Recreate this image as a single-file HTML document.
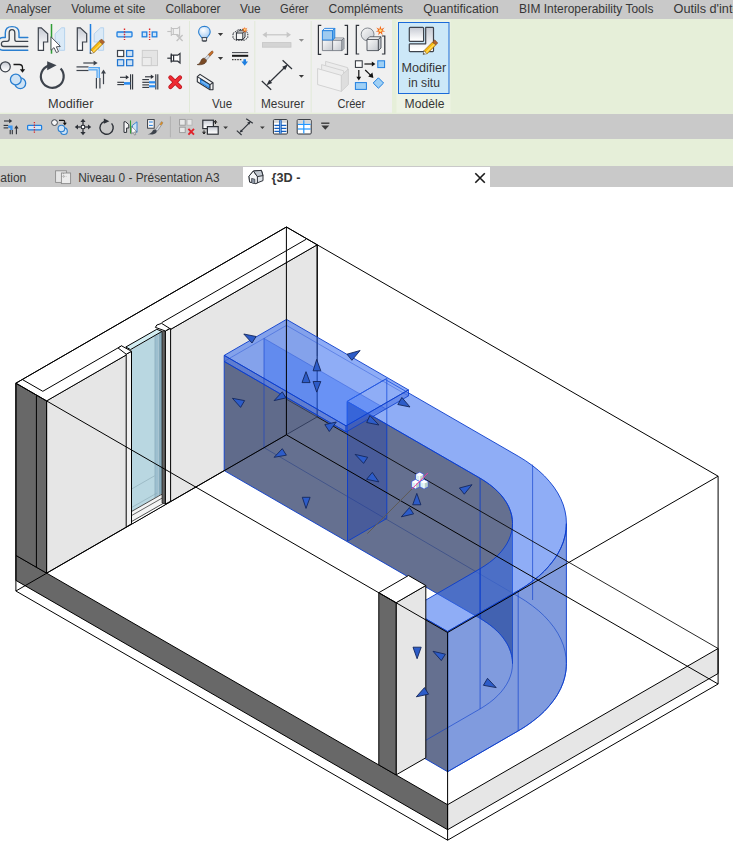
<!DOCTYPE html>
<html lang="fr"><head><meta charset="utf-8"><title>Revit - {3D}</title>
<style>
html,body{margin:0;padding:0;background:#fff;}
body{width:733px;height:850px;overflow:hidden;font-family:"Liberation Sans",sans-serif;}
svg{display:block;}
svg text{font-family:"Liberation Sans",sans-serif;}
</style></head><body>
<svg width="733" height="850" viewBox="0 0 733 850">
<rect x="0" y="0" width="733" height="850" fill="#fff"/>
<g id="scene">
<polygon points="15.9,555.4 447.6,804.7 447.6,829.7 15.9,580.4" fill="#686868" stroke="#000" stroke-width="1.0" />
<polygon points="447.6,804.7 718.1,648.5 718.1,673.5 447.6,829.7" fill="#e6e6e6" stroke="#000" stroke-width="1.0" />
<polygon points="46.6,400.9 317.2,244.8 317.2,416.9 46.6,573.1" fill="#e6e6e6" stroke="#000" stroke-width="1.0" />
<polygon points="15.9,383.2 46.6,400.9 46.6,573.1 15.9,555.4" fill="#686868" stroke="#000" stroke-width="1.0" />
<polygon points="15.9,383.2 286.4,227.0 317.2,244.8 46.6,400.9" fill="#fff" stroke="#000" stroke-width="1.0" />
<line x1="36.4" y1="395.1" x2="36.4" y2="567.2" stroke="#000" stroke-width="1.0" />
<polyline points="22.3,379.5 42.8,391.3 306.1,239.3" fill="none" stroke="#000" stroke-width="1.0" />
<g id="door" stroke-linejoin="round">
<polygon points="121.5,344.2 161.6,321.4 161.6,325.4 121.5,348.0" fill="#fff" stroke="none" stroke-width="1" />
<polygon points="126.2,353.9 170.6,328.4 170.6,501.5 126.2,527.2" fill="#fff" stroke="none" stroke-width="1" />
<polygon points="131.5,349.5 154.9,335.8 154.9,497.7 131.5,511.5" fill="#b9d7e1" stroke="none" stroke-width="1" />
<polygon points="154.9,335.8 158.7,333.6 158.7,495.5 154.9,497.7" fill="#9dbfcf" stroke="none" stroke-width="1" />
<polygon points="158.7,333.6 162.0,331.6 162.0,493.5 158.7,495.5" fill="#86aabb" stroke="none" stroke-width="1" />
<line x1="154.9" y1="336.0" x2="154.9" y2="497.7" stroke="#7fa3b3" stroke-width="0.6" />
<line x1="131.6" y1="489.0" x2="154.6" y2="475.8" stroke="#8aa8b4" stroke-width="0.6" />
<line x1="131.6" y1="507.5" x2="157.0" y2="493.0" stroke="#8aa8b4" stroke-width="0.6" />
<polygon points="131.5,511.5 162.2,494.0 163.6,503.2 131.5,521.6" fill="#f4f4f4" stroke="#000" stroke-width="0.7" />
<line x1="131.5" y1="515.6" x2="163.0" y2="497.6" stroke="#000" stroke-width="0.6" />
<polygon points="125.8,347.0 156.8,329.3 162.0,331.4 130.5,349.6" fill="#d4eef3" stroke="#000" stroke-width="1.0" />
<polygon points="126.2,354.2 131.5,351.3 131.5,523.8 126.2,527.0" fill="#f2f2f2" stroke="#000" stroke-width="1.0" />
<polygon points="162.0,331.4 165.4,331.0 165.4,504.0 162.0,503.0" fill="#626262" stroke="#000" stroke-width="0.6" />
<polygon points="165.4,331.0 170.6,328.4 170.6,501.3 165.4,504.0" fill="#f2f2f2" stroke="#000" stroke-width="1.0" />
<polygon points="118.1,348.0 121.5,345.8 131.5,351.3 126.2,354.2" fill="#fff" stroke="#000" stroke-width="1.0" />
<polygon points="155.4,327.4 156.8,325.0 161.6,323.4 169.7,328.4 165.4,331.0" fill="#fff" stroke="#000" stroke-width="1.0" />
</g>
<line x1="317.2" y1="244.8" x2="317.2" y2="356.0" stroke="#000" stroke-width="1.0" />
<line x1="317.2" y1="356.0" x2="317.2" y2="416.9" stroke="#000" stroke-width="0.6" />
<line x1="286.4" y1="399.2" x2="317.2" y2="416.9" stroke="#000" stroke-width="1.0" />
<g id="model" stroke-linejoin="round">
<polyline points="264.0,447.6 518.2,596.4 518.2,596.4 525.5,600.9 532.4,605.8 538.7,610.8 544.4,616.1 549.4,621.6 553.9,627.3 557.7,633.1 560.8,639.0 563.3,645.1 565.0,651.2 566.1,657.4 566.4,663.6 566.1,669.9 565.0,676.1 563.3,682.2 560.8,688.3 557.7,694.2 553.9,700.0 549.4,705.7 544.4,711.2 538.7,716.5 532.4,721.5 525.5,726.4 518.2,730.9 447.6,771.7" fill="none" stroke="#0a3ccc" stroke-width="0.8" stroke-opacity="0.9"/>
<polygon points="224.2,361.4 347.0,432.4 347.0,401.4 480.1,478.2 480.1,478.2 482.6,479.7 485.0,481.3 487.4,482.9 489.6,484.5 491.8,486.2 493.9,487.9 495.8,489.7 497.7,491.5 499.5,493.3 501.1,495.1 502.7,497.0 504.1,499.0 505.4,500.9 506.7,502.9 507.8,504.9 508.8,506.9 509.6,508.9 510.4,511.0 511.1,513.0 511.6,515.1 512.0,517.2 512.3,519.3 512.5,521.4 512.5,523.5 512.5,663.6 512.5,661.6 512.3,659.5 512.0,657.4 511.6,655.3 511.1,653.2 510.4,651.2 509.6,649.1 508.8,647.1 507.8,645.1 506.7,643.1 505.4,641.1 504.1,639.2 502.7,637.2 501.1,635.3 499.5,633.5 497.7,631.7 495.8,629.9 493.9,628.1 491.8,626.4 489.6,624.7 487.4,623.1 485.0,621.5 482.6,619.9 480.1,618.4 480.1,618.4 224.2,470.6" fill="rgb(62,76,116)" stroke="#0a3ccc" stroke-width="0.9" fill-opacity="0.8"/>
<polygon points="347.5,401.1 386.8,423.8 386.8,518.5 347.5,541.2" fill="rgb(30,60,170)" stroke="none" stroke-width="0" fill-opacity="0.38"/>
<polyline points="347.5,541.2 347.5,401.1 386.8,378.4 386.8,518.5 347.5,541.2" fill="none" stroke="#0a3ccc" stroke-width="0.9" />
<polygon points="405.9,391.4 518.2,456.2 518.2,456.2 525.5,460.7 532.4,465.6 538.7,470.6 544.4,475.9 549.4,481.4 553.9,487.1 557.7,492.9 560.8,498.8 563.3,504.9 565.0,511.0 566.1,517.2 566.4,523.5 566.1,529.7 565.0,535.9 563.3,542.0 560.8,548.1 557.7,554.0 553.9,559.8 549.4,565.5 544.4,571.0 538.7,576.3 532.4,581.3 525.5,586.2 518.2,590.7 447.6,631.5 409.5,609.5 480.1,568.7 485.0,565.6 489.6,562.4 493.9,559.0 497.7,555.4 501.1,551.8 504.1,547.9 506.7,544.0 508.8,540.0 510.4,535.9 511.6,531.8 512.3,527.6 512.5,523.5 512.3,519.3 511.6,515.1 510.4,511.0 508.8,506.9 506.7,502.9 504.1,499.0 501.1,495.1 497.7,491.5 493.9,487.9 489.6,484.5 485.0,481.3 480.1,478.2 480.1,478.2 367.8,413.4" fill="rgb(58,110,240)" stroke="none" stroke-width="0" fill-opacity="0.57"/>
<polyline points="347.0,401.4 385.1,379.4 518.2,456.2 518.2,456.2 525.5,460.7 532.4,465.6 538.7,470.6 544.4,475.9 549.4,481.4 553.9,487.1 557.7,492.9 560.8,498.8 563.3,504.9 565.0,511.0 566.1,517.2 566.4,523.5 566.1,529.7 565.0,535.9 563.3,542.0 560.8,548.1 557.7,554.0 553.9,559.8 549.4,565.5 544.4,571.0 538.7,576.3 532.4,581.3 525.5,586.2 518.2,590.7 447.6,631.5 409.5,609.5 480.1,568.7 485.0,565.6 489.6,562.4 493.9,559.0 497.7,555.4 501.1,551.8 504.1,547.9 506.7,544.0 508.8,540.0 510.4,535.9 511.6,531.8 512.3,527.6 512.5,523.5 512.3,519.3 511.6,515.1 510.4,511.0 508.8,506.9 506.7,502.9 504.1,499.0 501.1,495.1 497.7,491.5 493.9,487.9 489.6,484.5 485.0,481.3 480.1,478.2 480.1,478.2 347.0,401.4" fill="none" stroke="#0a3ccc" stroke-width="0.9" />
<polygon points="447.6,631.5 518.2,590.7 518.2,590.7 521.9,588.5 525.5,586.2 529.0,583.8 532.4,581.3 535.6,578.8 538.7,576.3 541.6,573.7 544.4,571.0 547.0,568.3 549.4,565.5 551.7,562.7 553.9,559.8 555.9,557.0 557.7,554.0 559.3,551.1 560.8,548.1 562.1,545.0 563.3,542.0 564.2,538.9 565.0,535.9 565.6,532.8 566.1,529.7 566.3,526.6 566.4,523.5 566.4,663.6 566.3,666.8 566.1,669.9 565.6,673.0 565.0,676.1 564.2,679.1 563.3,682.2 562.1,685.2 560.8,688.3 559.3,691.3 557.7,694.2 555.9,697.2 553.9,700.0 551.7,702.9 549.4,705.7 547.0,708.5 544.4,711.2 541.6,713.9 538.7,716.5 535.6,719.0 532.4,721.5 529.0,724.0 525.5,726.4 521.9,728.7 518.2,730.9 447.6,771.7" fill="rgb(44,88,200)" stroke="#0a3ccc" stroke-width="0.9" fill-opacity="0.6"/>
<polygon points="424.7,618.2 447.6,631.5 447.6,771.7 424.7,758.4" fill="rgb(62,76,116)" stroke="#0a3ccc" stroke-width="0.9" fill-opacity="0.8"/>
<polygon points="224.2,355.4 286.5,319.4 408.5,389.9 346.1,425.9" fill="rgb(58,110,240)" stroke="#0a3ccc" stroke-width="0.9" fill-opacity="0.57"/>
<polygon points="264.0,338.4 385.9,408.9 346.1,425.9 264.0,378.4" fill="rgb(40,100,245)" stroke="none" stroke-width="0" fill-opacity="0.36"/>
<polygon points="224.2,355.4 346.1,425.9 346.1,431.9 224.2,361.4" fill="rgb(50,90,200)" stroke="#0a3ccc" stroke-width="0.9" fill-opacity="0.75"/>
<polygon points="346.1,425.9 408.5,389.9 408.5,395.9 346.1,431.9" fill="rgb(60,100,220)" stroke="#0a3ccc" stroke-width="0.8" fill-opacity="0.45"/>
<polyline points="224.2,361.4 286.5,325.4 408.5,395.9" fill="none" stroke="#0a3ccc" stroke-width="0.6" stroke-opacity="0.6"/>
<line x1="264.0" y1="338.4" x2="385.9" y2="408.9" stroke="#0a3ccc" stroke-width="0.6" stroke-opacity="0.6"/>
<line x1="264.0" y1="338.4" x2="264.0" y2="447.6" stroke="#0a3ccc" stroke-width="0.7" stroke-opacity="0.8"/>
<line x1="480.1" y1="478.2" x2="480.1" y2="618.4" stroke="#0a3ccc" stroke-width="0.9" stroke-opacity="0.9"/>
<line x1="518.2" y1="590.7" x2="518.2" y2="730.9" stroke="#0a3ccc" stroke-width="0.8" stroke-opacity="0.8"/>
<line x1="480.1" y1="568.7" x2="480.1" y2="708.9" stroke="#0a3ccc" stroke-width="0.8" stroke-opacity="0.8"/>
<line x1="532.6" y1="464.6" x2="532.6" y2="600.0" stroke="#0a3ccc" stroke-width="0.8" stroke-opacity="0.8"/>
<polyline points="480.1,618.4 485.0,621.5 489.6,624.7 493.9,628.1 497.7,631.7 501.1,635.3 504.1,639.2 506.7,643.1 508.8,647.1 510.4,651.2 511.6,655.3 512.3,659.5 512.5,663.6 512.3,667.8 511.6,672.0 510.4,676.1 508.8,680.2 506.7,684.2 504.1,688.1 501.1,692.0 497.7,695.6 493.9,699.2 489.6,702.6 485.0,705.8 480.1,708.9 409.5,749.7" fill="none" stroke="#0a3ccc" stroke-width="0.7" stroke-opacity="0.85"/>
</g>
<polygon points="396.1,602.7 425.8,585.5 425.8,757.8 396.1,774.9" fill="#e6e6e6" stroke="#000" stroke-width="1.0" />
<polygon points="378.8,592.7 396.1,602.7 396.1,774.9 378.8,764.9" fill="#686868" stroke="#000" stroke-width="1.0" />
<polygon points="378.8,592.7 408.5,575.5 425.8,585.5 396.1,602.7" fill="#fff" stroke="#000" stroke-width="1.0" />
<line x1="15.9" y1="383.2" x2="286.4" y2="227.0" stroke="#000" stroke-width="1.0" />
<line x1="15.9" y1="591.0" x2="286.4" y2="434.8" stroke="#000" stroke-width="1.0" />
<line x1="15.9" y1="383.2" x2="15.9" y2="591.0" stroke="#000" stroke-width="1.0" />
<line x1="286.4" y1="227.0" x2="718.1" y2="476.2" stroke="#000" stroke-width="1.0" />
<line x1="286.4" y1="434.8" x2="718.1" y2="684.0" stroke="#000" stroke-width="1.0" />
<line x1="286.4" y1="227.0" x2="286.4" y2="434.8" stroke="#000" stroke-width="1.0" />
<line x1="718.1" y1="476.2" x2="447.6" y2="632.5" stroke="#000" stroke-width="1.0" />
<line x1="718.1" y1="684.0" x2="447.6" y2="840.2" stroke="#000" stroke-width="1.0" />
<line x1="718.1" y1="476.2" x2="718.1" y2="684.0" stroke="#000" stroke-width="1.0" />
<line x1="447.6" y1="632.5" x2="15.9" y2="383.2" stroke="#000" stroke-width="1.0" />
<line x1="447.6" y1="840.2" x2="15.9" y2="591.0" stroke="#000" stroke-width="1.0" />
<line x1="447.6" y1="632.5" x2="447.6" y2="840.2" stroke="#000" stroke-width="1.0" />
<line x1="317.2" y1="416.9" x2="718.1" y2="648.5" stroke="#000" stroke-width="0.85" />
</g>
<g id="arrows">
<polygon points="243.8,334.0 256.1,336.5 252.0,343.0" fill="#2d5cc8" stroke="#14275c" stroke-width="0.9" stroke-linejoin="round"/>
<polygon points="316.7,359.4 313.1,370.8 320.8,370.8" fill="#2d5cc8" stroke="#14275c" stroke-width="0.9" stroke-linejoin="round"/>
<polygon points="306.0,371.7 302.0,382.6 310.1,382.6" fill="#2d5cc8" stroke="#14275c" stroke-width="0.9" stroke-linejoin="round"/>
<polygon points="316.7,392.1 313.1,381.5 320.8,381.5" fill="#2d5cc8" stroke="#14275c" stroke-width="0.9" stroke-linejoin="round"/>
<polygon points="232.4,398.3 244.6,400.6 240.6,407.4" fill="#2d5cc8" stroke="#14275c" stroke-width="0.9" stroke-linejoin="round"/>
<polygon points="274.1,400.6 282.3,391.8 285.9,397.9" fill="#2d5cc8" stroke="#14275c" stroke-width="0.9" stroke-linejoin="round"/>
<polygon points="360.1,350.5 347.0,354.2 351.9,360.3" fill="#2d5cc8" stroke="#14275c" stroke-width="0.9" stroke-linejoin="round"/>
<polygon points="401.9,397.5 397.8,404.5 410.0,407.0" fill="#2d5cc8" stroke="#14275c" stroke-width="0.9" stroke-linejoin="round"/>
<polygon points="369.9,415.5 366.7,422.5 378.9,425.0" fill="#2d5cc8" stroke="#14275c" stroke-width="0.9" stroke-linejoin="round"/>
<polygon points="324.8,424.6 336.3,422.0 329.3,431.5" fill="#2d5cc8" stroke="#14275c" stroke-width="0.9" stroke-linejoin="round"/>
<polygon points="274.1,457.3 282.3,448.7 286.4,455.2" fill="#2d5cc8" stroke="#14275c" stroke-width="0.9" stroke-linejoin="round"/>
<polygon points="306.0,508.4 302.3,497.3 310.1,497.3" fill="#2d5cc8" stroke="#14275c" stroke-width="0.9" stroke-linejoin="round"/>
<polygon points="355.1,454.4 367.7,457.3 363.6,463.4" fill="#2d5cc8" stroke="#14275c" stroke-width="0.9" stroke-linejoin="round"/>
<polygon points="366.6,479.3 372.3,472.4 378.9,481.9" fill="#2d5cc8" stroke="#14275c" stroke-width="0.9" stroke-linejoin="round"/>
<polygon points="416.8,493.4 412.7,504.8 420.9,504.8" fill="#2d5cc8" stroke="#14275c" stroke-width="0.9" stroke-linejoin="round"/>
<polygon points="401.3,516.8 409.5,507.6 413.6,513.9" fill="#2d5cc8" stroke="#14275c" stroke-width="0.9" stroke-linejoin="round"/>
<polygon points="459.4,488.0 472.0,484.7 464.3,494.2" fill="#2d5cc8" stroke="#14275c" stroke-width="0.9" stroke-linejoin="round"/>
<polygon points="417.1,658.7 413.0,647.2 421.2,647.2" fill="#2d5cc8" stroke="#14275c" stroke-width="0.9" stroke-linejoin="round"/>
<polygon points="433.0,651.3 445.4,654.2 441.3,660.6" fill="#2d5cc8" stroke="#14275c" stroke-width="0.9" stroke-linejoin="round"/>
<polygon points="416.3,696.8 424.5,687.6 428.6,694.2" fill="#2d5cc8" stroke="#14275c" stroke-width="0.9" stroke-linejoin="round"/>
<polygon points="487.5,678.3 483.4,685.3 496.2,687.6" fill="#2d5cc8" stroke="#14275c" stroke-width="0.9" stroke-linejoin="round"/>
<line x1="367.3" y1="533.7" x2="412.1" y2="488.8" stroke="#5f5a55" stroke-width="1"/>
<g transform="translate(416.0,472.6)" stroke-linejoin="round"><polygon points="3.7,0 7.4,1.9 7.4,6.9 3.7,8.6 0,6.9 0,1.9" fill="#fff" stroke="#3d5be6" stroke-width="1.1"/><polygon points="0,1.9 3.7,3.8 3.7,8.6 0,6.9" fill="#d6f0f6"/><polygon points="3.7,3.8 7.4,1.9 7.4,6.9 3.7,8.6" fill="#b9cfc9"/><polygon points="3.7,0 7.4,1.9 3.7,3.8 0,1.9" fill="#fff"/><line x1="3.7" y1="3.8" x2="3.7" y2="8.6" stroke="#fff" stroke-width="1"/></g>
<g transform="translate(411.9,479.8)" stroke-linejoin="round"><polygon points="3.7,0 7.4,1.9 7.4,6.9 3.7,8.6 0,6.9 0,1.9" fill="#fff" stroke="#3d5be6" stroke-width="1.1"/><polygon points="0,1.9 3.7,3.8 3.7,8.6 0,6.9" fill="#d6f0f6"/><polygon points="3.7,3.8 7.4,1.9 7.4,6.9 3.7,8.6" fill="#b9cfc9"/><polygon points="3.7,0 7.4,1.9 3.7,3.8 0,1.9" fill="#fff"/><line x1="3.7" y1="3.8" x2="3.7" y2="8.6" stroke="#fff" stroke-width="1"/></g>
<g transform="translate(420.4,479.8)" stroke-linejoin="round"><polygon points="3.7,0 7.4,1.9 7.4,6.9 3.7,8.6 0,6.9 0,1.9" fill="#fff" stroke="#3d5be6" stroke-width="1.1"/><polygon points="0,1.9 3.7,3.8 3.7,8.6 0,6.9" fill="#d6f0f6"/><polygon points="3.7,3.8 7.4,1.9 7.4,6.9 3.7,8.6" fill="#b9cfc9"/><polygon points="3.7,0 7.4,1.9 3.7,3.8 0,1.9" fill="#fff"/><line x1="3.7" y1="3.8" x2="3.7" y2="8.6" stroke="#fff" stroke-width="1"/></g>
<line x1="412.1" y1="488.8" x2="427.9" y2="472.9" stroke="#f23aa6" stroke-width="1"/>
</g>
<g id="chrome">
<rect x="0" y="0" width="733" height="19" fill="#c9c9c9"/>
<rect x="0" y="19" width="733" height="95" fill="#e6efd9"/>
<rect x="0" y="20" width="392" height="92.7" fill="#f0f0f0"/>
<rect x="396.5" y="20" width="54" height="92.7" fill="#edf3e4"/>
<rect x="0" y="114" width="733" height="25" fill="#c9c9c9"/>
<rect x="0" y="139" width="733" height="27" fill="#e6efd9"/>
<rect x="0" y="166" width="733" height="21" fill="#c9c9c9"/>
<rect x="243" y="167" width="247" height="20" fill="#fff"/>
<line x1="189.5" y1="21" x2="189.5" y2="112.5" stroke="#e1e9d8" stroke-width="1"/>
<line x1="254.8" y1="21" x2="254.8" y2="112.5" stroke="#e1e9d8" stroke-width="1"/>
<line x1="311.2" y1="21" x2="311.2" y2="112.5" stroke="#e1e9d8" stroke-width="1"/>
<text x="6.0" y="13.0" font-size="12" fill="#363636" font-weight="normal" text-anchor="start" textLength="45.1" lengthAdjust="spacingAndGlyphs">Analyser</text>
<text x="71.2" y="13.0" font-size="12" fill="#363636" font-weight="normal" text-anchor="start" textLength="74.2" lengthAdjust="spacingAndGlyphs">Volume et site</text>
<text x="165.4" y="13.0" font-size="12" fill="#363636" font-weight="normal" text-anchor="start" textLength="55.2" lengthAdjust="spacingAndGlyphs">Collaborer</text>
<text x="240.0" y="13.0" font-size="12" fill="#363636" font-weight="normal" text-anchor="start" textLength="20.7" lengthAdjust="spacingAndGlyphs">Vue</text>
<text x="280.1" y="13.0" font-size="12" fill="#363636" font-weight="normal" text-anchor="start" textLength="28.4" lengthAdjust="spacingAndGlyphs">Gérer</text>
<text x="328.6" y="13.0" font-size="12" fill="#363636" font-weight="normal" text-anchor="start" textLength="74.5" lengthAdjust="spacingAndGlyphs">Compléments</text>
<text x="423.2" y="13.0" font-size="12" fill="#363636" font-weight="normal" text-anchor="start" textLength="75.5" lengthAdjust="spacingAndGlyphs">Quantification</text>
<text x="519.1" y="13.0" font-size="12" fill="#363636" font-weight="normal" text-anchor="start" textLength="134.3" lengthAdjust="spacingAndGlyphs">BIM Interoperability Tools</text>
<text x="673.5" y="13.0" font-size="12" fill="#363636" font-weight="normal" text-anchor="start" textLength="66.0" lengthAdjust="spacingAndGlyphs">Outils d'inte</text>
<text x="48.0" y="107.7" font-size="12" fill="#363636" font-weight="normal" text-anchor="start" textLength="45.4" lengthAdjust="spacingAndGlyphs">Modifier</text>
<text x="212.0" y="107.7" font-size="12" fill="#363636" font-weight="normal" text-anchor="start" textLength="20.2" lengthAdjust="spacingAndGlyphs">Vue</text>
<text x="261.0" y="107.7" font-size="12" fill="#363636" font-weight="normal" text-anchor="start" textLength="43.4" lengthAdjust="spacingAndGlyphs">Mesurer</text>
<text x="337.5" y="107.7" font-size="12" fill="#363636" font-weight="normal" text-anchor="start" textLength="27.7" lengthAdjust="spacingAndGlyphs">Créer</text>
<text x="404.6" y="107.7" font-size="12" fill="#363636" font-weight="normal" text-anchor="start" textLength="39.8" lengthAdjust="spacingAndGlyphs">Modèle</text>
<rect x="398.5" y="22.5" width="50.5" height="71" fill="#cce8f8" stroke="#1a6ad9" stroke-width="1"/>
<text x="401.4" y="72.2" font-size="12" fill="#363636" font-weight="normal" text-anchor="start" textLength="44.8" lengthAdjust="spacingAndGlyphs">Modifier</text>
<text x="408.3" y="86.6" font-size="12" fill="#363636" font-weight="normal" text-anchor="start" textLength="31.7" lengthAdjust="spacingAndGlyphs">in situ</text>
<text x="0.3" y="181.8" font-size="12" fill="#363636" font-weight="normal" text-anchor="start" textLength="26.0" lengthAdjust="spacingAndGlyphs">ation</text>
<text x="78.2" y="181.8" font-size="12" fill="#363636" font-weight="normal" text-anchor="start" textLength="141.4" lengthAdjust="spacingAndGlyphs">Niveau 0 - Présentation A3</text>
<text x="271.6" y="181.8" font-size="12" fill="#363636" font-weight="bold" text-anchor="start" textLength="28.8" lengthAdjust="spacingAndGlyphs">{3D -</text>
<path d="M475.3 173.2 L484.8 182.7 M484.8 173.2 L475.3 182.7" stroke="#1a1a1a" stroke-width="1.6" fill="none"/>
</g>
<g id="icons">
<defs>
<linearGradient id="gw" x1="0" y1="0" x2="0" y2="1"><stop offset="0" stop-color="#c6cad3"/><stop offset="0.9" stop-color="#ffffff"/></linearGradient>
<linearGradient id="gb" x1="0" y1="0" x2="0" y2="1"><stop offset="0" stop-color="#eef6fd"/><stop offset="1" stop-color="#b9d8f2"/></linearGradient>
<linearGradient id="gg" x1="0" y1="0" x2="1" y2="1"><stop offset="0" stop-color="#fafafa"/><stop offset="1" stop-color="#c4c8ce"/></linearGradient>
<radialGradient id="gbulb" cx="0.4" cy="0.35" r="0.7"><stop offset="0" stop-color="#ffffff"/><stop offset="1" stop-color="#a9cdf3"/></radialGradient>
<path id="mshape" d="M0 0 H3 L9.4 6 V14.2 H5.2 V22.5 H0 Z"/>
<path id="tri" d="M-2.6 -1.3 H2.6 L0 1.6 Z"/>
<g id="star"><path d="M0 -5 L1.1 -1.6 L4.3 -3.2 L2.2 -0.4 L5 1 L1.7 1.3 L2.2 4.8 L0 2.2 L-2.2 4.8 L-1.7 1.3 L-5 1 L-2.2 -0.4 L-4.3 -3.2 L-1.1 -1.6 Z" fill="#f26a1b"/><circle r="1.5" fill="#ffe27a"/></g>
<g id="pencil"><polygon points="0,0 0.84,-3.96 3.96,-0.84" fill="#fff" stroke="#5a4a2a" stroke-width="0.5"/><polygon points="0.84,-3.96 9.4,-12.52 12.52,-9.4 3.96,-0.84" fill="#f7b90c" stroke="#8a5a10" stroke-width="0.6"/><polygon points="2.4,-2.4 10.96,-10.96 12.0,-9.9 3.4,-1.4" fill="#ffd95a"/><polygon points="9.4,-12.52 11.52,-14.64 14.64,-11.52 12.52,-9.4" fill="#b5652b" stroke="#70401a" stroke-width="0.5"/><polygon points="0,0 0.4,-1.7 1.7,-0.4" fill="#333"/></g>
<g id="cursor"><polygon points="0,0 0,13.5 3,10.8 5.4,15.8 7.6,14.8 5.3,10 9.4,9.6" fill="#fff" stroke="#3d434c" stroke-width="0.9" stroke-linejoin="round"/></g>
</defs>

<!-- ===== Modifier panel : large icons ===== -->
<g fill="none" stroke-linecap="round" stroke-linejoin="round">
 <path d="M27.8 37.5 H19 V33 C19 28.5 15.8 26.6 12 26.6 C8.3 26.6 5.3 28.6 5.3 33 V37.5 H3 C0 37.5 -2 40 -2 44 C-2 48 0 50.3 3 50.3 H27.8" stroke="#2a7fd0" stroke-width="1.4"/>
 <path d="M27.8 41.3 H16.3 C15.2 41.3 14.8 40.4 14.8 39 V33 C14.8 30.6 13.5 29.6 12 29.6 C10.5 29.6 9.2 30.6 9.2 33 V39 C9.2 40.6 8.5 41.3 7 41.3 H4 C2.2 41.3 1.4 42.5 1.4 43.9 C1.4 45.4 2.3 46.5 4 46.5 H27.8" stroke="#3d434c" stroke-width="1.3"/>
</g>
<!-- mirror pick axis -->
<use href="#mshape" x="38.3" y="27.8" fill="url(#gw)" stroke="#3d434c" stroke-width="1.2"/>
<use href="#mshape" transform="translate(64.6,27.8) scale(-1,1)" fill="#dbeaf7" stroke="#b5d3ee" stroke-width="1"/>
<line x1="51.5" y1="24" x2="51.5" y2="53.7" stroke="#2f9e35" stroke-width="1.5"/>
<use href="#cursor" x="51" y="36.8"/>
<!-- mirror draw axis -->
<use href="#mshape" x="77.3" y="27.8" fill="url(#gw)" stroke="#3d434c" stroke-width="1.2"/>
<use href="#mshape" transform="translate(103.6,27.8) scale(-1,1)" fill="#dbeaf7" stroke="#b5d3ee" stroke-width="1"/>
<line x1="90.5" y1="24" x2="90.5" y2="53.7" stroke="#1f7fe0" stroke-width="1.5"/>
<use href="#pencil" x="90" y="53.6"/>
<!-- copy -->
<circle cx="5.3" cy="66.8" r="5" fill="url(#gw)" stroke="#3d434c" stroke-width="1.2"/>
<path d="M13.5 64.5 H19.3 C21.6 64.5 22.5 65.8 22.5 67.8 V70" fill="none" stroke="#1a1a1a" stroke-width="1.3"/>
<polygon points="19.8,69.3 25.2,69.3 22.5,72.8" fill="#1a1a1a"/>
<circle cx="20.3" cy="83.3" r="5.4" fill="#cfe3f5" stroke="#2a7fd0" stroke-width="1.3"/>
<circle cx="15.8" cy="79.5" r="5.4" fill="#cfe3f5" stroke="#2a7fd0" stroke-width="1.3"/>
<!-- rotate -->
<path d="M60.6 68.6 A11.4 11.4 0 1 1 48.6 65.6" fill="none" stroke="#3d434c" stroke-width="2.2"/>
<polygon points="47.2,61.3 56.6,65.3 47.2,70.2" fill="#3d434c"/>
<!-- trim/extend to corner -->
<g stroke="#3d434c" stroke-width="1.2" fill="none">
 <line x1="83.3" y1="63" x2="95" y2="63"/>
 <line x1="76.5" y1="66.9" x2="88.5" y2="66.9"/><line x1="76.5" y1="70.5" x2="88.5" y2="70.5"/>
 <line x1="96.4" y1="78" x2="96.4" y2="88.6"/><line x1="99.9" y1="78" x2="99.9" y2="88.6"/>
 <line x1="103.5" y1="84.2" x2="103.5" y2="72"/>
</g>
<polygon points="93.6,60.4 97.6,63 93.6,65.6" fill="#3d434c"/>
<polygon points="101,73.4 103.5,69.4 106,73.4" fill="#3d434c"/>
<path d="M88.5 68.7 H98.2 V78" fill="none" stroke="#58a8f2" stroke-width="3.6"/>
<path d="M88.5 68.7 H98.2 V78" fill="none" stroke="#cfe6fb" stroke-width="1"/>

<!-- ===== Modifier panel : small icons ===== -->
<rect x="117" y="32" width="15" height="4.8" rx="0.8" fill="#cfe6f8" stroke="#1f7fe0" stroke-width="1.3"/>
<line x1="124.5" y1="28.6" x2="124.5" y2="40" stroke="#e02626" stroke-width="1.4" stroke-dasharray="1.4 1.2"/>
<rect x="142.2" y="32" width="4.6" height="4.8" fill="#cfe6f8" stroke="#1f7fe0" stroke-width="1.3"/>
<rect x="152.2" y="32" width="4.6" height="4.8" fill="#cfe6f8" stroke="#1f7fe0" stroke-width="1.3"/>
<line x1="149.6" y1="28.6" x2="149.6" y2="40" stroke="#e02626" stroke-width="1.4" stroke-dasharray="1.4 1.2"/>
<!-- unpin (disabled) -->
<g stroke="#c2c2c2" stroke-width="1.1" fill="none">
 <line x1="167.3" y1="31.5" x2="171.3" y2="31.5"/>
 <path d="M171.3 27 V36 M173.3 28.5 H177.5 M173.3 34.5 H177.5 M171.3 28.5 H173.3 V34.5 H171.3 M177.5 28.5 L179.6 26.8 V36.2 L177.5 34.5"/>
 <path d="M176.6 35 L182.6 41 M182.6 35 L176.6 41" stroke-width="1.4"/>
</g>
<!-- array -->
<rect x="117.5" y="50.5" width="6.2" height="6" fill="#fff" stroke="#3d434c" stroke-width="1.2"/>
<rect x="126.6" y="50.5" width="6.2" height="6" fill="#cfe3f5" stroke="#1f74d0" stroke-width="1.2"/>
<rect x="117.5" y="59.7" width="6.2" height="6" fill="#cfe3f5" stroke="#1f74d0" stroke-width="1.2"/>
<rect x="126.6" y="59.7" width="6.2" height="6" fill="#cfe3f5" stroke="#1f74d0" stroke-width="1.2"/>
<!-- scale (disabled) -->
<rect x="142.3" y="50.4" width="15.2" height="15.2" fill="#e4e4e4" stroke="#cdcdcd" stroke-width="1"/>
<rect x="142.3" y="57.5" width="9" height="8.1" fill="#ececec" stroke="#cdcdcd" stroke-width="1"/>
<!-- pin -->
<g stroke="#2d3138" stroke-width="1.2" fill="#fff">
 <line x1="167.3" y1="58.2" x2="171.3" y2="58.2"/>
 <path d="M171.3 53.6 V62.6" />
 <path d="M171.3 55.2 H173.6 V61.2 H171.3 Z M173.6 55.2 H177.8 L180 53.4 V63 L177.8 61.2 H173.6"/>
</g>
<!-- trim single -->
<g stroke="#2d3138" stroke-width="1.1" fill="none">
 <line x1="120" y1="77.3" x2="126.5" y2="77.3"/>
 <line x1="117.3" y1="82.3" x2="124" y2="82.3"/><line x1="117.3" y1="84.6" x2="124" y2="84.6"/>
 <line x1="130.6" y1="74.2" x2="130.6" y2="89.4"/><line x1="132.6" y1="74.2" x2="132.6" y2="89.4"/>
</g>
<polygon points="125.8,75 129,77.3 125.8,79.6" fill="#2d3138"/>
<line x1="124" y1="83.4" x2="130.2" y2="83.4" stroke="#2b8cf0" stroke-width="2.6"/>
<!-- trim multiple -->
<g stroke="#2d3138" stroke-width="1.1" fill="none">
 <line x1="145" y1="76.8" x2="151.5" y2="76.8"/>
 <line x1="142.3" y1="79.6" x2="149" y2="79.6"/><line x1="142.3" y1="82.3" x2="149" y2="82.3"/>
 <line x1="142.3" y1="84.9" x2="149" y2="84.9"/><line x1="142.3" y1="87.4" x2="149" y2="87.4"/>
 <line x1="155.8" y1="74.2" x2="155.8" y2="89.4"/><line x1="157.8" y1="74.2" x2="157.8" y2="89.4"/>
</g>
<polygon points="150.8,74.5 154,76.8 150.8,79.1" fill="#2d3138"/>
<line x1="149" y1="82.3" x2="155.4" y2="82.3" stroke="#2b8cf0" stroke-width="2.2"/>
<line x1="149" y1="86.3" x2="155.4" y2="86.3" stroke="#2b8cf0" stroke-width="2.2"/>
<!-- delete -->
<path d="M170.4 77.4 L180 87 M180 77.4 L170.4 87" stroke="#b8141c" stroke-width="4.2" stroke-linecap="round" fill="none"/>
<path d="M170.4 77.4 L180 87 M180 77.4 L170.4 87" stroke="#ee2b33" stroke-width="2.8" stroke-linecap="round" fill="none"/>

<!-- ===== Vue panel ===== -->
<!-- bulb -->
<path d="M204.4 26.4 C200.6 26.4 198.6 29 198.6 31.9 C198.6 34.6 200.6 35.8 201.6 37.6 H207.2 C208.2 35.8 210.2 34.6 210.2 31.9 C210.2 29 208.2 26.4 204.4 26.4 Z" fill="url(#gbulb)" stroke="#2a7fd0" stroke-width="1.1"/>
<rect x="202.2" y="37.6" width="4.4" height="3.2" fill="#eee" stroke="#3d434c" stroke-width="0.9"/>
<line x1="202.6" y1="41.2" x2="206.2" y2="41.2" stroke="#3d434c" stroke-width="1"/>
<use href="#tri" x="220.5" y="34.3" fill="#3a3a3a"/>
<!-- brush -->
<path d="M197.2 64.6 C199.5 64.2 200.5 62 201.3 60 C202.5 57.6 205.5 57.8 206.3 59.6 C207 61.4 205.8 63.2 203.6 64 C201.6 64.8 199 65 197.2 64.6 Z" fill="#7a4a25" stroke="#4a2a12" stroke-width="0.6"/>
<path d="M204.8 58.2 L211.4 51.4 L213 53 L206.6 60 Z" fill="#d8dde3" stroke="#70757c" stroke-width="0.5"/>
<path d="M208.2 54.6 L211.6 51.2 C212.4 50.4 213.8 51.8 213 52.7 L209.8 56.2 Z" fill="#c9702a" stroke="#7a4013" stroke-width="0.5"/>
<use href="#tri" x="220.5" y="58.4" fill="#3a3a3a"/>
<!-- cut box -->
<g stroke="#2d3138" stroke-width="1.1" fill="none" stroke-linejoin="round">
 <path d="M197.3 76.6 L200 74.4 L213 82.8 V89.6 L210 89.8 L197.3 81.8 Z" fill="#f4f4f4"/>
 <path d="M200.6 79 L209.4 84.4 V88 L200.6 82.6 Z" fill="#6db4f5" stroke="#1f7fe0"/>
 <path d="M197.3 76.6 L210 84.6 V89.8 M210 84.6 L213 82.8"/>
</g>
<!-- render in cloud -->
<g stroke="#2d3138" stroke-width="1" fill="none">
 <path d="M233 33.4 L238.4 29.6 H245 L247.8 33.4 V37.8 L244.6 40.2 H236 L233 38.4 Z" stroke-dasharray="1.6 1"/>
 <rect x="236.4" y="33" width="6.4" height="6.6" fill="#f4f4f4"/>
 <path d="M236.4 33 L238.6 30.8 H245 L242.8 33 M245 30.8 V37 L242.8 39.6"/>
</g>
<use href="#star" transform="translate(244.8,29.8) scale(0.62)"/>
<!-- thin lines -->
<line x1="232" y1="52.6" x2="248.2" y2="52.6" stroke="#2d3138" stroke-width="0.9"/>
<line x1="232" y1="55.8" x2="248.2" y2="55.8" stroke="#1a1a1a" stroke-width="2"/>
<line x1="232" y1="59.7" x2="242" y2="59.7" stroke="#1a1a1a" stroke-width="1" stroke-dasharray="1.6 1"/>
<path d="M243.4 59.2 H246 V61.6 H248 L244.7 65.8 L241.4 61.6 H243.4 Z" fill="#1f7fe0"/>

<!-- ===== Mesurer ===== -->
<g stroke="#c6c6c6" fill="#c6c6c6">
 <line x1="264.5" y1="34.8" x2="289" y2="34.8" stroke-width="1.2"/>
 <polygon points="266.8,31.8 262.4,34.8 266.8,37.8" stroke="none"/>
 <polygon points="286.6,31.8 291,34.8 286.6,37.8" stroke="none"/>
 <rect x="262.4" y="42.6" width="28.6" height="4.6" fill="#d4d4d4" stroke-width="0.8"/>
</g>
<use href="#tri" x="301.4" y="40.2" fill="#8e8e8e"/>
<g stroke="#2d3138" stroke-width="1.2" fill="#2d3138">
 <line x1="268" y1="83.8" x2="286.4" y2="65.8"/>
 <line x1="261.8" y1="81" x2="271.2" y2="89.8"/>
 <line x1="282.6" y1="60.2" x2="292" y2="69"/>
 <polygon points="266.6,85.2 272.2,82.9 269.2,79.7" stroke="none"/>
 <polygon points="287.8,64.4 285.2,69.9 282.2,66.7" stroke="none"/>
</g>
<use href="#tri" x="301.4" y="76.2" fill="#3a3a3a"/>

<!-- ===== Creer ===== -->
<!-- assembly -->
<g stroke="#2d3138" stroke-width="1.2" fill="none">
 <path d="M321.3 25.3 H318.4 V54.3 H321.3 M344.6 25.3 H347.5 V54.3 H344.6"/>
</g>
<g stroke="#6a7079" stroke-width="0.8" stroke-linejoin="round">
 <path d="M322.4 40 H332.6 V50.6 H322.4 Z" fill="url(#gg)"/>
 <path d="M332.6 40 H342 V50.6 H332.6 Z" fill="url(#gg)"/>
 <path d="M332.6 40 L334.8 38 H344 L342 40 Z" fill="#fafafa"/>
 <path d="M342 40 L344 38 V48.6 L342 50.6 Z" fill="#c4c8ce"/>
</g>
<g stroke="#1f7fe0" stroke-width="0.9" stroke-linejoin="round">
 <path d="M322.4 30.6 H332.6 V40 H322.4 Z" fill="#9fcbf0"/>
 <path d="M322.4 30.6 L324.6 28.4 H334.8 L332.6 30.6 Z" fill="#e6f2fc"/>
 <path d="M332.6 30.6 L334.8 28.4 V38 L332.6 40 Z" fill="#6aaee8"/>
</g>
<!-- parts -->
<g stroke="#2d3138" stroke-width="1.2" fill="none">
 <path d="M359.2 25.3 H356.3 V54 H359.2 M381.9 36 H384.8 V54 H381.9"/>
</g>
<circle cx="367.6" cy="34.4" r="6.4" fill="url(#gg)" stroke="#6a7079" stroke-width="0.8"/>
<g stroke="#4a4f57" stroke-width="0.9" stroke-linejoin="round">
 <path d="M367 39.4 H378.4 V50.6 H367 Z" fill="url(#gg)"/>
 <path d="M367 39.4 L369.6 36.8 H381 L378.4 39.4 Z" fill="#fafafa"/>
 <path d="M378.4 39.4 L381 36.8 V48 L378.4 50.6 Z" fill="#c0c4ca"/>
</g>
<use href="#star" transform="translate(380.4,30.6) scale(0.95)"/>
<!-- group (disabled) -->
<g stroke="#cfcfcf" stroke-width="0.9" stroke-linejoin="round" fill="#ececec">
 <path d="M325.6 61.4 L347.6 67.6 V83.6 L325.6 77.4 Z"/>
 <path d="M321.6 64.6 L343.6 70.8 V86.8 L321.6 80.6 Z"/>
 <path d="M317.6 68.6 L341.4 75.4 V91.4 L317.6 84.6 Z" fill="#f2f2f2"/>
 <path d="M341.4 75.4 L348.4 69 V84.6 L341.4 91.4 Z" fill="#dedede"/>
</g>
<!-- create similar -->
<rect x="355.4" y="60.8" width="6.8" height="6.6" fill="#fafafa" stroke="#2d3138" stroke-width="1"/>
<rect x="377.8" y="60.8" width="6.8" height="6.8" fill="#9fd0f5" stroke="#1f7fe0" stroke-width="1"/>
<rect x="355.4" y="82.6" width="11" height="6.8" fill="#9fd0f5" stroke="#1f7fe0" stroke-width="1"/>
<polygon points="378.4,77.8 383.6,83 378.4,88.2 373.2,83" fill="#9fd0f5" stroke="#1f7fe0" stroke-width="1"/>
<g stroke="#111" stroke-width="1.2" fill="#111">
 <line x1="364.4" y1="64" x2="372.6" y2="64"/><polygon points="371.8,61.6 375.4,64 371.8,66.4" stroke="none"/>
 <line x1="358.8" y1="70" x2="358.8" y2="77.4"/><polygon points="356.4,76.8 358.8,80.4 361.2,76.8" stroke="none"/>
 <line x1="365.2" y1="70" x2="371" y2="75.6"/><polygon points="372.4,72.6 373.4,78 368.2,76.6" stroke="none"/>
</g>

<!-- ===== Modifier in situ ===== -->
<g stroke="#3d434c" stroke-width="1.2" stroke-linejoin="round">
 <path d="M425.7 27.4 H432.7 Q433.5 27.4 433.5 28.2 V50.8 Q433.5 51.6 432.7 51.6 H410.1 Q409.3 51.6 409.3 50.8 V44.6 Q409.3 43.8 410.1 43.8 H425.7 Z" fill="url(#gw)"/>
 <rect x="409.3" y="27.4" width="14.3" height="13.9" rx="0.9" fill="url(#gw)"/>
</g>
<use href="#pencil" transform="translate(423.2,54.5)"/>

<!-- ===== quick toolbar row ===== -->
<g stroke="#2d3138" stroke-width="1.1" fill="none">
 <line x1="4" y1="121" x2="10" y2="121"/>
 <line x1="3.6" y1="125.4" x2="8.2" y2="125.4"/><line x1="3.6" y1="127.9" x2="8.2" y2="127.9"/>
 <line x1="10.2" y1="130" x2="10.2" y2="134.3"/><line x1="12.3" y1="130" x2="12.3" y2="134.3"/>
 <line x1="16.4" y1="134.3" x2="16.4" y2="127.6"/>
</g>
<polygon points="9.2,118.8 12.2,121 9.2,123.2" fill="#2d3138"/>
<polygon points="14.2,128.4 16.4,125.2 18.6,128.4" fill="#2d3138"/>
<path d="M8.2 126.7 H11.4 V130" fill="none" stroke="#3c98f4" stroke-width="2.4"/>
<rect x="27.6" y="125.4" width="14" height="4.4" rx="0.8" fill="#cfe6f8" stroke="#1f7fe0" stroke-width="1.2"/>
<line x1="34.4" y1="122" x2="34.4" y2="132.8" stroke="#e02626" stroke-width="1.3" stroke-dasharray="1.3 1.1"/>
<circle cx="54.5" cy="122.6" r="2.9" fill="#f6f6f6" stroke="#3d434c" stroke-width="1"/>
<path d="M59 120.4 H63.2 C64.4 120.4 64.8 121 64.8 122 V123.2" fill="none" stroke="#111" stroke-width="1.1"/>
<polygon points="62.8,122.8 66.8,122.8 64.8,125.4" fill="#111"/>
<circle cx="64" cy="131.2" r="3.3" fill="#cfe3f5" stroke="#2a7fd0" stroke-width="1.1"/>
<circle cx="61.4" cy="128.5" r="3.3" fill="#cfe3f5" stroke="#2a7fd0" stroke-width="1.1"/>
<!-- move -->
<g stroke="#2d3138" stroke-width="1.3" fill="#2d3138">
 <line x1="77" y1="127" x2="89" y2="127"/><line x1="83" y1="121" x2="83" y2="133"/>
 <polygon points="78,124.4 74.8,127 78,129.6" stroke="none"/><polygon points="88,124.4 91.2,127 88,129.6" stroke="none"/>
 <polygon points="80.4,122 83,118.8 85.6,122" stroke="none"/><polygon points="80.4,132 83,135.2 85.6,132" stroke="none"/>
 <rect x="81.4" y="125.4" width="3.2" height="3.2" fill="#fff" stroke-width="0.9"/>
</g>
<path d="M111.6 123.4 A6.6 6.6 0 1 1 104.6 121.4" fill="none" stroke="#2d3138" stroke-width="1.4"/>
<polygon points="103.8,118.6 109.4,121.2 103.8,123.8" fill="#2d3138"/>
<!-- mirror small -->
<path d="M124 121.8 H125.6 L128.8 124.6 V128 H126.6 V132.4 H124 Z" fill="#f4f4f4" stroke="#2d3138" stroke-width="1"/>
<line x1="130.5" y1="120.4" x2="130.5" y2="133.6" stroke="#2f9e35" stroke-width="1.1"/>
<path d="M137 121.8 L132.4 125.4 V129 L137 132.4 Z" fill="#cfe3f5" stroke="#2a7fd0" stroke-width="0.9"/>
<use href="#cursor" transform="translate(131.6,126.4) scale(0.55)"/>
<!-- match type -->
<rect x="147.6" y="119.6" width="6.6" height="8.6" fill="#f6f6f6" stroke="#2d3138" stroke-width="0.9"/>
<line x1="149" y1="122" x2="152.8" y2="122" stroke="#1f7fe0" stroke-width="1"/><line x1="149" y1="125.4" x2="152.8" y2="125.4" stroke="#1f7fe0" stroke-width="1"/>
<path d="M147.6 134.2 C150.8 134 152 132 152.8 130.6 C153.8 129 156.4 129.4 156.8 131 C157 132.8 155 134.2 152.4 134.4 Z" fill="#3d434c"/>
<path d="M155.6 129.6 L161.6 121.6 L163 122.8 L157.4 131 Z" fill="#d8dde3" stroke="#5a5f66" stroke-width="0.5"/>
<path d="M159.6 124.4 L161.6 121.6 L163 122.8 L161 125.6 Z" fill="#d08a2a"/>
<line x1="170.4" y1="116.4" x2="170.4" y2="137.4" stroke="#b2b2b2" stroke-width="1"/>
<!-- select-off -->
<rect x="179.6" y="119.4" width="5.6" height="5.8" fill="#e8e8e8" stroke="#9a9a9a" stroke-width="0.9"/>
<rect x="187" y="119.4" width="5" height="5.8" fill="#e8e8e8" stroke="#b4b4b4" stroke-width="0.9"/>
<rect x="179.6" y="127.2" width="5.6" height="5.4" fill="#e8e8e8" stroke="#9a9a9a" stroke-width="0.9"/>
<path d="M188.4 128.8 L194 134.6 M194 128.8 L188.4 134.6" stroke="#e0222a" stroke-width="1.9" fill="none"/>
<!-- switch windows -->
<rect x="202.8" y="120.2" width="10.6" height="8.4" fill="url(#gw)" stroke="#2d3138" stroke-width="1.2"/>
<rect x="207.4" y="126.6" width="10.8" height="7.6" fill="url(#gw)" stroke="#2d3138" stroke-width="1.2"/>
<path d="M215.4 124 V121.4 M214 122.6 L215.4 120.4 L216.8 122.6 M204 130.4 V133 M202.6 131.8 L204 134 L205.4 131.8" stroke="#111" stroke-width="1" fill="none"/>
<use href="#tri" transform="translate(225.6,127.6) scale(0.9)" fill="#3a3a3a"/>
<!-- aligned dim small -->
<g stroke="#2d3138" stroke-width="1.1" fill="#2d3138">
 <line x1="240.6" y1="131.6" x2="249.6" y2="122.6"/>
 <line x1="236.8" y1="130.6" x2="241.6" y2="135"/><line x1="246.2" y1="118.8" x2="252.8" y2="123.2"/>
 <polygon points="239.4,132.8 243,131.6 241,129.4" stroke="none"/><polygon points="250.8,121.4 247.2,122.6 249.2,124.8" stroke="none"/>
</g>
<use href="#tri" transform="translate(262.4,127.6) scale(0.9)" fill="#3a3a3a"/>
<!-- tables -->
<rect x="273.4" y="119.6" width="14" height="14.4" rx="1" fill="#fff" stroke="#2d3138" stroke-width="1"/>
<rect x="274" y="120.2" width="12.8" height="2.6" fill="#d6d6d6"/>
<g stroke="#1560c0" stroke-width="1.3"><line x1="274.4" y1="125.4" x2="286.4" y2="125.4"/><line x1="274.4" y1="128.4" x2="286.4" y2="128.4"/><line x1="274.4" y1="131.4" x2="286.4" y2="131.4"/></g>
<line x1="280.4" y1="120.2" x2="280.4" y2="133.6" stroke="#0f58b8" stroke-width="2.6"/>
<line x1="280.4" y1="120.6" x2="280.4" y2="133.4" stroke="#9fd0ff" stroke-width="0.7"/>
<rect x="297.2" y="119.6" width="14" height="14.4" rx="1" fill="#fff" stroke="#2d3138" stroke-width="1"/>
<rect x="297.8" y="120.2" width="12.8" height="3.4" fill="#d6d6d6"/>
<g stroke="#2196ff" stroke-width="1.2"><line x1="303.8" y1="120.2" x2="303.8" y2="133.6"/><line x1="297.8" y1="124.4" x2="310.6" y2="124.4"/><line x1="297.8" y1="129" x2="310.6" y2="129"/></g>
<line x1="321.2" y1="123.2" x2="329.4" y2="123.2" stroke="#3a3a3a" stroke-width="1.4"/>
<polygon points="321.4,125.6 329.2,125.6 325.3,129.8" fill="#3a3a3a"/>

<!-- ===== view tab icons ===== -->
<g stroke="#8c8c8c" stroke-width="0.9" fill="#e6e6e6">
 <rect x="55.6" y="170.8" width="10.8" height="11.6"/>
 <rect x="61.4" y="173" width="9.2" height="10.6" fill="#ececec"/>
 <path d="M61.4 176.4 H66.4 M63.6 173 V178" stroke-dasharray="1.2 1" fill="none" stroke-width="0.7"/>
</g>
<g stroke="#2d3138" stroke-width="1" stroke-linejoin="round">
 <path d="M249 176.2 L253.4 171 L261.4 170.4 L263 175.6 V180.6 L255.4 183.6 L249.6 182 Z" fill="#dfe3e8"/>
 <path d="M249 176.2 L253.4 171 L257.4 176.6 V183 L255.4 183.6 L249.6 182 Z" fill="#f6f7f9"/>
 <path d="M253.4 171 L261.4 170.4 L263 175.6 L257.4 176.6 Z" fill="#c3c9d1"/>
 <path d="M251.6 182.4 V178.4 L254.8 179.2 V183.4" fill="#8d97a5" stroke-width="0.7"/>
</g>

</g>
</svg>
</body></html>
